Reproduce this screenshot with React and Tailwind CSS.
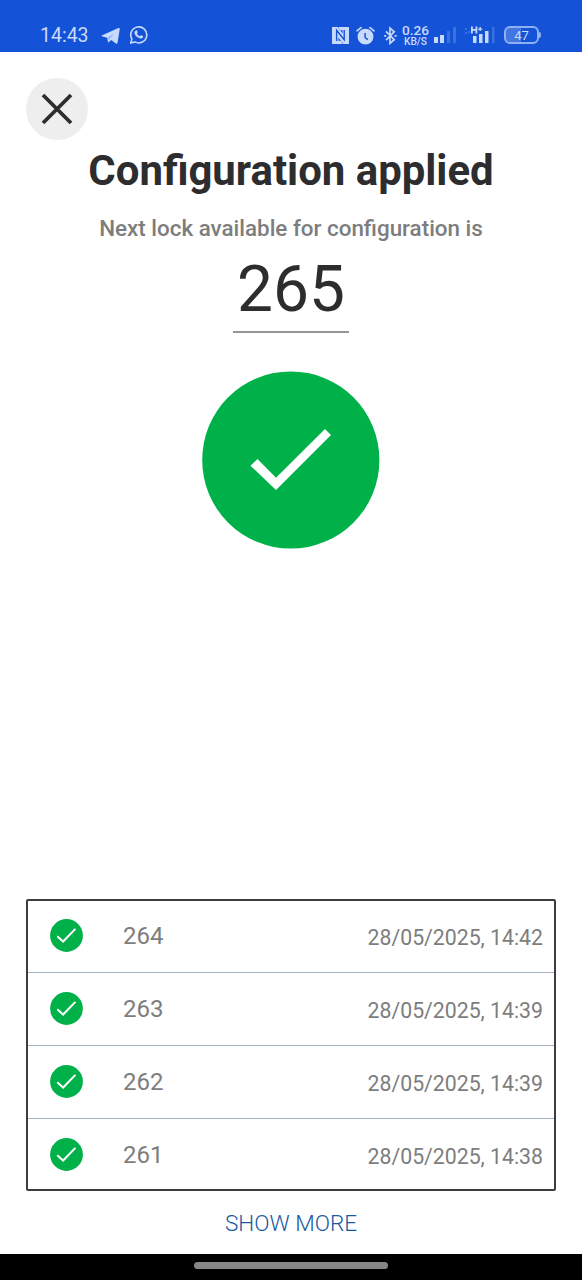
import React from "react";

const entries = [
  { id: "264", date: "28/05/2025, 14:42" },
  { id: "263", date: "28/05/2025, 14:39" },
  { id: "262", date: "28/05/2025, 14:39" },
  { id: "261", date: "28/05/2025, 14:38" },
];

function StatusBar() {
  return (
    <header className="flex h-[52px] shrink-0 items-start bg-[#1452d8] pl-[40px] pt-[23px] text-[#c8dafb]">
      <span className="w-[61px] pt-px text-[19.5px] leading-6">14:43</span>
      <svg className="mt-[4px]" width="20" height="18" viewBox="0 0 20 18" fill="currentColor">
        <path d="M1.2 8.2 17.4 1.1c.9-.3 1.5.1 1.3 1.2l-2.1 13.3c-.2 1.1-.9 1.3-1.7.8l-4.7-3.5-2.3 2.2c-.5.5-.9.3-1-.3l-.7-4L1.3 9.4c-.9-.3-.9-.8-.1-1.2z" />
        <path d="m7.2 10.6 6-4.2-4.5 5.2-.6 2z" fill="#1452d8" opacity=".35" />
      </svg>
      <svg className="ml-[8px] mt-[2px]" width="20" height="20" viewBox="0 0 20 20" fill="none">
        <path d="M1.7 18.1 2.9 14a8 8 0 1 1 3 2.9z" stroke="currentColor" strokeWidth="1.6" strokeLinejoin="round" />
        <path d="M6.9 5.4c.5-.3 1-.2 1.2.3l.7 1.6-.9 1.3c.7 1.3 1.6 2.1 2.9 2.7l1.2-1.1 1.9.9c.4.3.3.8 0 1.3-.7 1-1.9 1.3-3.1.9-2.6-.8-4.6-2.7-5.3-4.9-.3-1.2.3-2.4 1.4-3z" fill="currentColor" />
      </svg>

      <svg className="ml-[183px] mt-[4px]" width="17" height="17" viewBox="0 0 17 17">
        <path d="M0 0h5.6l5 6.6V3.2H8.4L6.2 0H17v17h-5.6l-5-6.6v3.4h2.2l2.2 3.2H0z" fill="currentColor" />
        <path d="M4.6 14V3.2l7.6 9.6V3" fill="none" stroke="#1452d8" strokeWidth="1.4" />
      </svg>
      <svg className="ml-[7px] mt-[3px]" width="19" height="19" viewBox="0 0 19 19" fill="none">
        <circle cx="9.5" cy="10.7" r="7.9" fill="currentColor" />
        <path d="m1 4.8 4-3.2M18 4.8l-4-3.2" stroke="currentColor" strokeWidth="1.7" strokeLinecap="round" />
        <path d="M9.1 7v4.5l2.7 2.2" stroke="#1452d8" strokeWidth="1.5" />
      </svg>
      <svg className="ml-[9px] mt-[3px]" width="13" height="20" viewBox="0 0 13 20" fill="none" stroke="currentColor" strokeWidth="1.7">
        <path d="m2 5.4 8.2 8.3-4.2 3.6V2.2l4.2 3.6L2 14.1" />
        <path d="M.2 9.8h2M10.6 9.8h2" />
      </svg>
      <div className="ml-[5px] flex w-[27px] flex-col items-center font-medium">
        <span className="text-[13.7px] leading-[14px]">0.26</span>
        <span className="text-[10.2px] leading-[10px]">KB/S</span>
      </div>
      <svg className="ml-[5px] mt-[3px]" width="24" height="18" viewBox="0 0 24 18" fill="currentColor">
        <path d="M0 11h4v6H0zM6 9h4v8H6z" />
        <path d="M13 5h3v12h-3zM19 1h3v16h-3z" opacity=".22" />
      </svg>
      <svg className="ml-[7px] mt-[3px]" width="32" height="18" viewBox="0 0 32 18" fill="currentColor">
        <path d="M8 10h3.5v7H8zM14 8h3.5v9H14zM20 5h3.5v12H20z" />
        <path d="M27 1h2.5v16H27zM0 2h2v2H0zM3 5h2v2H3zM0 6h2v2H0z" opacity=".22" />
        <path d="M6 .5h1.8V3h2.7V.5h1.8v7h-1.8V4.8H7.8v2.7H6zM14.5 1h1.3v1.4h1.4v1.3h-1.4v1.4h-1.3V3.7h-1.4V2.4h1.4z" />
      </svg>
      <div className="ml-[7px] mt-[3px] flex items-center">
        <div className="flex h-[18px] w-[35px] items-center justify-center rounded-[6px] border-2 border-[#8fb0f3] bg-linear-to-r from-[#4376e0] from-47% to-transparent to-47% text-[13px] leading-none">47</div>
        <div className="h-[6px] w-[2px] rounded-r bg-[#8fb0f3]" />
      </div>
    </header>
  );
}

export default function App() {
  return (
    <div className="flex h-[1280px] w-[582px] flex-col overflow-hidden bg-white font-['Roboto','Liberation_Sans',sans-serif]">
      <StatusBar />
      <main className="flex min-h-0 flex-1 flex-col items-center px-[26px] pt-[26px]">
        <button aria-label="Close" className="flex size-[62px] items-center justify-center self-start rounded-full bg-[#eeeeee]">
          <svg className="mr-px" width="32" height="32" viewBox="0 0 32 32" stroke="#2d2d2f" strokeWidth="3.8">
            <path d="m2 2 28 28M30 2 2 30" />
          </svg>
        </button>
        <h1 className="mt-[6px] whitespace-nowrap text-[41.9px] font-bold leading-[50px] text-[#2d2d2f]">Configuration applied</h1>
        <p className="mt-[18px] whitespace-nowrap text-[22.4px] font-medium leading-7 text-[#7d7d7d]">Next lock available for configuration is</p>
        <div className="mt-[9px] flex h-[82px] w-[116px] justify-center border-b-2 border-[#949494] text-[64px] leading-[77px] text-[#2d2d2f]">265</div>
        <svg className="mt-[38px] shrink-0" width="178" height="178" viewBox="0 0 178 178">
          <circle cx="88.8" cy="89" r="88.6" fill="#00b14a" />
          <path d="m48.5 95 7-6.8L74 107l49-48.8 6 6-55 55z" fill="#fff" transform="translate(0 -.2)" />
        </svg>

        <ul className="mt-auto w-full shrink-0 rounded-[2px] border-2 border-[#3d3d3f]">
          {entries.map((e) => (
            <li key={e.id} className="group flex h-[73px] items-center border-b border-[#a3b4c0] pb-[2px] pl-[22px] pr-[11px] text-[#7d7d7d] first:h-[72px] last:h-[70px] last:border-b-0 last:pb-0">
              <svg className="shrink-0" width="33" height="33" viewBox="0 0 33 33">
                <circle cx="16.5" cy="16.5" r="16.4" fill="#00b14a" />
                <path d="m7.3 17.3 5.8 5.2L25.4 9.9" fill="none" stroke="#fff" strokeWidth="2" />
              </svg>
              <span className="ml-[40px] pt-[2px] text-[24px] leading-7 group-first:pb-[2px]">{e.id}</span>
              <span className="ml-auto pt-[6px] text-[21.25px] leading-7 group-first:pb-[2px]">{e.date}</span>
            </li>
          ))}
        </ul>
        <button className="flex h-[63px] shrink-0 items-center whitespace-nowrap pt-[3px] text-[22.5px] font-light text-[#1858a0]">SHOW MORE</button>
      </main>
      <footer className="flex h-[26px] shrink-0 items-start justify-center bg-black pt-[8px]">
        <div className="h-[7px] w-[194px] rounded-full bg-[#858585]" />
      </footer>
    </div>
  );
}
